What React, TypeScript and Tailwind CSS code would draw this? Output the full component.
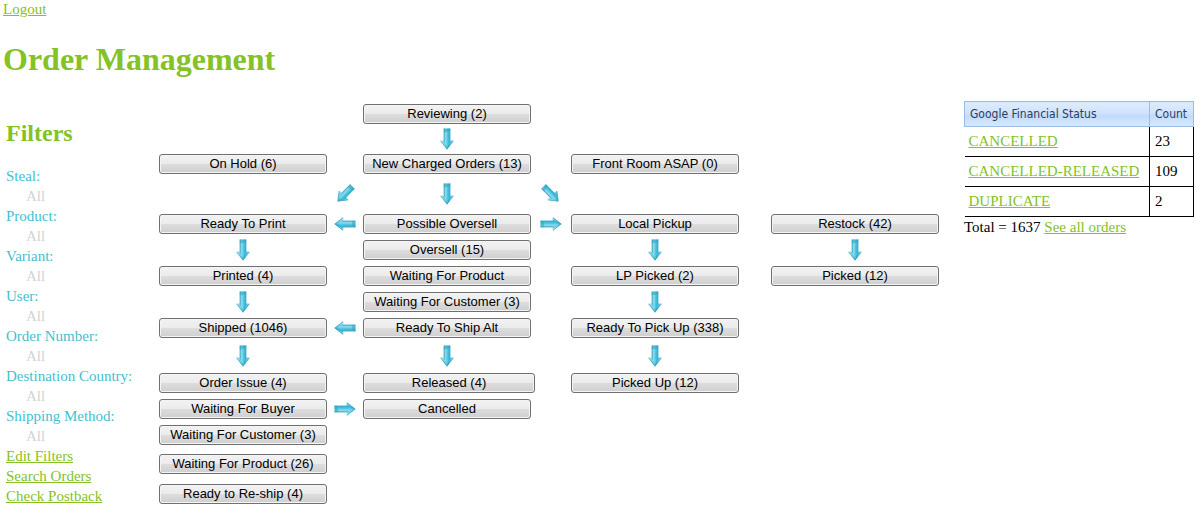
type Direction = "down" | "left" | "right" | "down-left" | "down-right";

const rotations: Record<Direction, string> = {
  down: "",
  left: "rotate-90",
  right: "-rotate-90",
  "down-left": "rotate-45",
  "down-right": "-rotate-45",
};

function Arrow({ direction, cell }: { direction: Direction; cell: string }) {
  return (
    <div className={`${cell} flex items-center justify-center`}>
      <svg
        viewBox="0 0 14 22"
        className={`h-[22px] w-[14px] ${rotations[direction]}`}
        aria-hidden="true"
      >
        <defs>
          <linearGradient id={`shaft-${direction}`} x1="0" y1="0" x2="1" y2="0">
            <stop offset="0" stopColor="#4cb4cd" />
            <stop offset="0.3" stopColor="#8fdcec" />
            <stop offset="0.6" stopColor="#4fc6e2" />
            <stop offset="1" stopColor="#2fa9cb" />
          </linearGradient>
          <linearGradient id={`head-${direction}`} x1="0" y1="0" x2="1" y2="0">
            <stop offset="0" stopColor="#b4e6f0" />
            <stop offset="0.35" stopColor="#6fd2e8" />
            <stop offset="0.6" stopColor="#2eb0d4" />
            <stop offset="1" stopColor="#9adcec" />
          </linearGradient>
        </defs>
        <path d="M0.3 12.6H13.7L7 21.4Z" fill={`url(#head-${direction})`} />
        <path d="M3.8 0.5H10.2V14L7 18.5L3.8 14Z" fill={`url(#shaft-${direction})`} />
        <path d="M3.8 0.5H10.2V3L3.8 4.5Z" fill="#2f9fbd" opacity="0.55" />
        <path d="M0.6 12.9L7 21.2L13.4 12.9" fill="none" stroke="#3a9bb3" strokeWidth="0.7" />
        <path d="M4.1 0.5V12.6M9.9 0.5V12.6" fill="none" stroke="#46a9c2" strokeWidth="0.6" />
      </svg>
    </div>
  );
}

function Stage({ label, cell, width = "w-full" }: { label: string; cell: string; width?: string }) {
  return (
    <div className={`${cell} flex items-center`}>
      <button
        type="button"
        className={`${width} h-5 shrink-0 rounded-[3px] border border-[#707070] bg-[linear-gradient(to_bottom,#f2f2f2_0%,#ebebeb_50%,#dddddd_50%,#cfcfcf_100%)] text-center font-['Liberation_Sans',Arial,sans-serif] text-[13px] leading-[18px] whitespace-nowrap text-black shadow-[inset_0_0_0_1px_#f4f4f4]`}
      >
        {label}
      </button>
    </div>
  );
}

const link = "text-[#84c225] underline";

const filters = [
  "Steal",
  "Product",
  "Variant",
  "User",
  "Order Number",
  "Destination Country",
  "Shipping Method",
];

const statuses = [
  { name: "CANCELLED", count: 23 },
  { name: "CANCELLED-RELEASED", count: 109 },
  { name: "DUPLICATE", count: 2 },
];

function Sidebar() {
  return (
    <aside className="w-[156px] shrink-0 pt-4 pl-[3px]">
      <h2 className="mb-[17px] text-2xl leading-8 font-bold text-[#84c225]">Filters</h2>
      <dl>
        {filters.map((name) => (
          <div key={name}>
            <dt className="text-[#3fc1d0]">{name}:</dt>
            <dd className="ml-5 text-[#d3d3d3]">All</dd>
          </div>
        ))}
      </dl>
      <nav className="flex flex-col items-start">
        <a href="#filters" className={link}>Edit Filters</a>
        <a href="#search" className={link}>Search Orders</a>
        <a href="#postback" className={link}>Check Postback</a>
      </nav>
    </aside>
  );
}

function Workflow() {
  return (
    <section
      aria-label="Order workflow"
      className="grid flex-1 grid-cols-[minmax(168px,1fr)_36px_minmax(168px,1fr)_40px_minmax(168px,1fr)_32px_minmax(168px,1fr)] grid-rows-[26px_24px_26px_34px_26px_26px_26px_26px_26px_29px_26px_26px_26px_32px_28px]"
    >
      <Stage label="Reviewing (2)" cell="col-start-3 row-start-1" />
      <Arrow direction="down" cell="col-start-3 row-start-2" />

      <Stage label="On Hold (6)" cell="col-start-1 row-start-3" />
      <Stage label="New Charged Orders (13)" cell="col-start-3 row-start-3" />
      <Stage label="Front Room ASAP (0)" cell="col-start-5 row-start-3" />

      <Arrow direction="down-left" cell="col-start-2 row-start-4" />
      <Arrow direction="down" cell="col-start-3 row-start-4" />
      <Arrow direction="down-right" cell="col-start-4 row-start-4" />

      <Stage label="Ready To Print" cell="col-start-1 row-start-5" />
      <Arrow direction="left" cell="col-start-2 row-start-5" />
      <Stage label="Possible Oversell" cell="col-start-3 row-start-5" />
      <Arrow direction="right" cell="col-start-4 row-start-5" />
      <Stage label="Local Pickup" cell="col-start-5 row-start-5" />
      <Stage label="Restock (42)" cell="col-start-7 row-start-5" />

      <Arrow direction="down" cell="col-start-1 row-start-6" />
      <Stage label="Oversell (15)" cell="col-start-3 row-start-6" />
      <Arrow direction="down" cell="col-start-5 row-start-6" />
      <Arrow direction="down" cell="col-start-7 row-start-6" />

      <Stage label="Printed (4)" cell="col-start-1 row-start-7" />
      <Stage label="Waiting For Product" cell="col-start-3 row-start-7" />
      <Stage label="LP Picked (2)" cell="col-start-5 row-start-7" />
      <Stage label="Picked (12)" cell="col-start-7 row-start-7" />

      <Arrow direction="down" cell="col-start-1 row-start-8" />
      <Stage label="Waiting For Customer (3)" cell="col-start-3 row-start-8" />
      <Arrow direction="down" cell="col-start-5 row-start-8" />

      <Stage label="Shipped (1046)" cell="col-start-1 row-start-9" />
      <Arrow direction="left" cell="col-start-2 row-start-9" />
      <Stage label="Ready To Ship Alt" cell="col-start-3 row-start-9" />
      <Stage label="Ready To Pick Up (338)" cell="col-start-5 row-start-9" />

      <Arrow direction="down" cell="col-start-1 row-start-10" />
      <Arrow direction="down" cell="col-start-3 row-start-10" />
      <Arrow direction="down" cell="col-start-5 row-start-10" />

      <Stage label="Order Issue (4)" cell="col-start-1 row-start-11" />
      <Stage label="Released (4)" cell="col-start-3 row-start-11" width="w-[172px]" />
      <Stage label="Picked Up (12)" cell="col-start-5 row-start-11" />

      <Stage label="Waiting For Buyer" cell="col-start-1 row-start-12" />
      <Arrow direction="right" cell="col-start-2 row-start-12" />
      <Stage label="Cancelled" cell="col-start-3 row-start-12" />

      <Stage label="Waiting For Customer (3)" cell="col-start-1 row-start-13" />
      <Stage label="Waiting For Product (26)" cell="col-start-1 row-start-14" />
      <Stage label="Ready to Re-ship (4)" cell="col-start-1 row-start-15" />
    </section>
  );
}

function FinancialStatus() {
  const head =
    "h-[25px] border border-[#99bbe8] bg-[linear-gradient(to_bottom,#deebfd_0%,#cfe2fc_48%,#bfdafb_52%,#d8e8fe_100%)] px-[5px] text-left font-['DejaVu_Sans_Condensed','DejaVu_Sans',sans-serif] text-xs leading-4 font-normal whitespace-nowrap text-[#2b3f5c]";
  return (
    <section className="ml-[25px] w-[230px] shrink-0 text-black">
      <table className="w-full table-fixed border-collapse">
        <colgroup>
          <col />
          <col className="w-[44px]" />
        </colgroup>
        <thead>
          <tr>
            <th scope="col" className={head}>Google Financial Status</th>
            <th scope="col" className={head}>Count</th>
          </tr>
        </thead>
        <tbody>
          {statuses.map(({ name, count }) => (
            <tr key={name} className="h-[30px]">
              <td className="border-r border-b border-black px-1 pb-[2px] whitespace-nowrap">
                <a href="#status" className={link}>{name}</a>
              </td>
              <td className="border-r border-b border-black px-[5px] pb-[2px]">{count}</td>
            </tr>
          ))}
        </tbody>
      </table>
      <p>
        Total = 1637 <a href="#all" className={link}>See all orders</a>
      </p>
    </section>
  );
}

export default function App() {
  return (
    <div className="min-w-fit bg-white pr-[9px] pl-[3px] font-['Liberation_Serif','Times_New_Roman',serif] text-[15px] leading-5">
      <header className="h-[101px]">
        <a href="#logout" className={`${link} block w-fit leading-[18px]`}>Logout</a>
        <h1 className="pt-[21px] text-[32px] leading-10 font-bold text-[#84c225]">Order Management</h1>
      </header>
      <main className="flex items-start">
        <Sidebar />
        <Workflow />
        <FinancialStatus />
      </main>
    </div>
  );
}
